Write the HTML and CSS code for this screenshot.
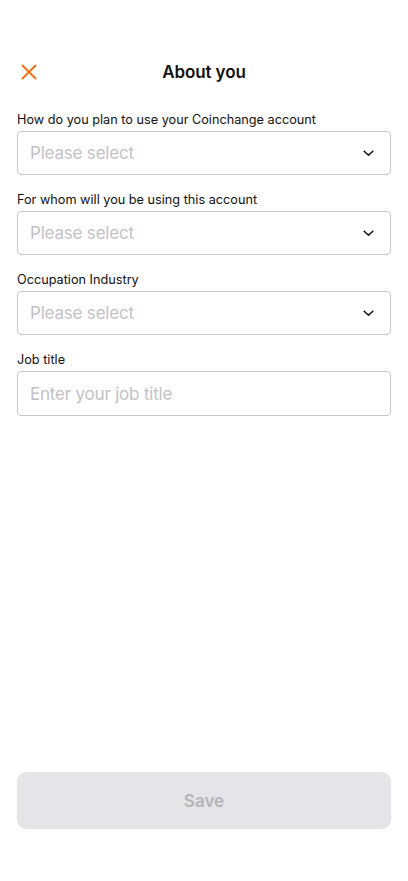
FILE: index.html
```html
<!DOCTYPE html>
<html lang="en">
<head>
    <meta charset="UTF-8">
    <meta name="viewport" content="width=device-width, initial-scale=1.0">
    <title>About you</title>
    <link rel="stylesheet" href="styles.css">
</head>
<body>
    <div class="page">
        <div class="header">
            <div class="close">
                <svg width="16" height="16" viewBox="0 0 16 16"><path d="M1.5 1.5L14.5 14.5M14.5 1.5L1.5 14.5" stroke="#f47216" stroke-width="2" stroke-linecap="round"/></svg>
            </div>
            <h1 class="title">About you</h1>
        </div>
        <div class="form">
            <div class="field">
                <label>How do you plan to use your Coinchange account</label>
                <div class="box select">
                    <span class="placeholder">Please select</span>
                    <svg class="chev" width="11" height="7" viewBox="0 0 11 7"><path d="M1.2 1.2L5.5 5.3L9.8 1.2" fill="none" stroke="#111" stroke-width="1.5" stroke-linecap="round" stroke-linejoin="round"/></svg>
                </div>
            </div>
            <div class="field">
                <label>For whom will you be using this account</label>
                <div class="box select">
                    <span class="placeholder">Please select</span>
                    <svg class="chev" width="11" height="7" viewBox="0 0 11 7"><path d="M1.2 1.2L5.5 5.3L9.8 1.2" fill="none" stroke="#111" stroke-width="1.5" stroke-linecap="round" stroke-linejoin="round"/></svg>
                </div>
            </div>
            <div class="field">
                <label>Occupation Industry</label>
                <div class="box select">
                    <span class="placeholder">Please select</span>
                    <svg class="chev" width="11" height="7" viewBox="0 0 11 7"><path d="M1.2 1.2L5.5 5.3L9.8 1.2" fill="none" stroke="#111" stroke-width="1.5" stroke-linecap="round" stroke-linejoin="round"/></svg>
                </div>
            </div>
            <div class="field">
                <label>Job title</label>
                <div class="box input">
                    <span class="placeholder">Enter your job title</span>
                </div>
            </div>
        </div>
        <div class="footer">
            <button class="save">Save</button>
        </div>
    </div>
</body>
</html>
```

FILE: styles.css
```css
*{
    box-sizing: border-box;
}
body{
    margin: 0;
    background: #fff;
    font-family: Inter, "Open Sans", sans-serif;
    color: #111;
}
.page{
    min-height: 100vh;
    display: flex;
    flex-direction: column;
    padding-top: 50px;
}
.header{
    height: 44px;
    display: flex;
    align-items: center;
    justify-content: center;
    position: relative;
}
.close{
    position: absolute;
    left: 21px;
    top: 14px;
    width: 16px;
    height: 16px;
    display: flex;
}
.title{
    margin: 0;
    font-size: 17px;
    font-weight: 600;
    letter-spacing: -0.1px;
}
.form{
    padding: 18px 17px 0;
}
.field{
    margin-bottom: 17px;
}
.field label{
    display: block;
    font-size: 12.7px;
    line-height: 16px;
    margin-bottom: 3px;
    color: #111;
}
.box{
    height: 44px;
    border: 1px solid #c9c9cc;
    border-radius: 4px;
    display: flex;
    align-items: center;
    padding: 0 16px 0 12px;
}
.box.input{
    height: 45px;
}
.select{
    justify-content: space-between;
}
.placeholder{
    font-size: 17px;
    color: #c2c2c6;
    letter-spacing: -0.2px;
}
.chev{
    margin-top: 1px;
}
.footer{
    margin-top: auto;
    padding: 0 17px 52px;
}
.save{
    width: 100%;
    height: 57px;
    border: none;
    border-radius: 9px;
    background: #e4e4e9;
    color: #b4b4b9;
    font-family: inherit;
    font-size: 17px;
    font-weight: 600;
}
```
